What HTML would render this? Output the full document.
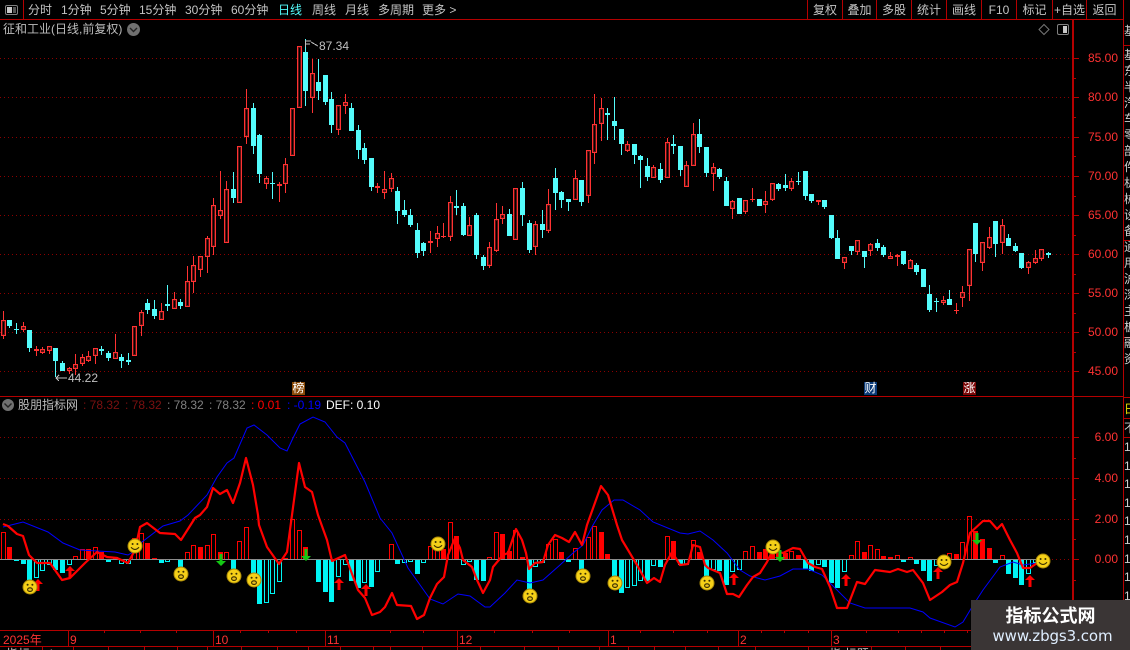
<!DOCTYPE html>
<html><head><meta charset="utf-8">
<style>
html,body{margin:0;padding:0;background:#000;}
#p{position:relative;width:1130px;height:650px;overflow:hidden;background:#000;font:12px/14px "Liberation Sans","WenQuanYi Zen Hei","Noto Sans CJK SC",sans-serif;color:#c4c4c4;}
#p div{position:absolute;white-space:nowrap;}
svg{position:absolute;left:0;top:0;}
.t{top:3px;}
.c{top:3px;text-align:center;}
.y{left:1087px;width:31px;text-align:right;color:#ff3232;}
.z{left:1087px;width:31px;text-align:right;color:#ff3232;}
.d{top:633px;color:#ff3232;}
.tag{width:13px;height:13px;line-height:13px;text-align:center;color:#fff;top:382px;font-size:12px;}
.i{top:398px;}
</style></head><body><div id="p">
<svg id="s" width="1130" height="650" viewBox="0 0 1130 650">
<defs>
<symbol id="h" viewBox="-8 -8 16 16" overflow="visible"><circle r="7" fill="#f5d018" stroke="#a88808"/><circle cx="-2.4" cy="-2" r="1" fill="#3a3000"/><circle cx="2.4" cy="-2" r="1" fill="#3a3000"/><path d="M-4 1.2Q0 5.6 4 1.2" fill="none" stroke="#3a3000" stroke-width="1.1"/></symbol>
<symbol id="u" viewBox="-8 -8 16 16" overflow="visible"><circle r="7" fill="#f5d018" stroke="#a88808"/><circle cx="-2.4" cy="-2.2" r="1" fill="#3a3000"/><circle cx="2.4" cy="-2.2" r="1" fill="#3a3000"/><ellipse cx="0" cy="2.6" rx="2.4" ry="1.8" fill="#e8c020" stroke="#3a3000" stroke-width="1.1"/></symbol>
</defs>
<g id="grid" fill="none" stroke="#8c0000" stroke-dasharray="1 3"><path d="M0 58.5H1072M0 97.5H1072M0 137.5H1072M0 176.5H1072M0 215.5H1072M0 254.5H1072M0 293.5H1072M0 332.5H1072M0 371.5H1072M0 437.5H1072M0 478.5H1072M0 519.5H1072M0 559.5H1072"/></g>
<g id="cand" shape-rendering="crispEdges"></g>
<rect x="0" y="559" width="1048" height="1" fill="#8c8c8c" shape-rendering="crispEdges"/>
<g id="bars" shape-rendering="crispEdges"></g>
<polyline fill="none" stroke="#0000ff" stroke-width="1" points="3,527 23,522 48,532 63,543 80,550 115,552 128,555 133,552 142,542 163,526 180,521 188,515 207,495 217,477 227,463 234,458 247,428 254,425 267,435 280,448 287,451 293,438 300,424 313,417 325,422 337,437 345,443 365,482 380,518 392,533 408,568 430,599 443,604 458,594 470,596 485,607 490,607 505,593 517,580 530,583 543,580 560,565 573,553 583,545 593,525 602,510 614,500 623,500 640,510 653,522 680,533 688,534 700,531 713,540 727,553 740,570 750,576 765,580 780,576 793,569 808,569 822,575 830,583 850,603 865,608 910,608 923,612 930,618 955,627 963,622 972,607 983,590 1000,567 1013,562 1023,565 1037,563"/>
<polyline fill="none" stroke="#ff0000" stroke-width="2.2" stroke-linejoin="round" points="3,524 8,526 17,534 23,536 29,555 37,563 50,563 62,580 70,578 85,563 97,552 107,557 117,558 128,563 135,550 140,527 147,523 160,533 175,534 181,540 195,518 200,515 207,507 213,488 220,494 227,490 233,503 240,483 246,458 253,485 258,515 259,525 267,547 279,564 287,552 292,515 299,463 305,487 312,492 318,515 327,540 332,561 345,555 358,590 365,598 372,615 380,612 385,607 392,593 397,605 411,606 417,619 424,615 430,598 437,584 444,577 448,555 455,538 460,548 463,560 472,567 477,580 483,593 490,580 493,567 503,555 508,553 516,529 522,540 526,553 529,569 535,563 543,562 548,545 555,535 562,538 569,542 575,532 582,545 587,525 601,486 608,495 617,525 622,540 628,550 637,565 647,583 654,578 660,582 665,565 672,552 680,565 688,564 693,545 700,547 705,565 708,568 720,573 727,594 733,594 739,597 747,585 753,577 760,573 767,562 773,550 783,553 793,548 800,549 808,563 815,567 822,569 830,587 837,608 847,608 857,582 865,584 875,570 890,572 898,569 907,572 913,570 923,583 930,600 942,592 950,585 957,582 963,563 970,533 983,521 990,521 997,529 1002,524 1010,540 1017,553 1023,568 1030,568 1037,563"/>
<g id="arrows"></g>
<use href="#u" x="22" y="579" width="16" height="16"/>
<use href="#h" x="127" y="538" width="16" height="16"/>
<use href="#u" x="173" y="566" width="16" height="16"/>
<use href="#u" x="226" y="568" width="16" height="16"/>
<use href="#u" x="246" y="572" width="16" height="16"/>
<use href="#h" x="430" y="536" width="16" height="16"/>
<use href="#u" x="522" y="588" width="16" height="16"/>
<use href="#u" x="575" y="568" width="16" height="16"/>
<use href="#u" x="607" y="575" width="16" height="16"/>
<use href="#u" x="699" y="575" width="16" height="16"/>
<use href="#h" x="765" y="539" width="16" height="16"/>
<use href="#h" x="936" y="554" width="16" height="16"/>
<use href="#h" x="1035" y="553" width="16" height="16"/>
<!-- high / low markers -->
<path d="M305.5 47V41H311M305.5 44H310M311 42L318 46" fill="none" stroke="#c0c0c0" shape-rendering="crispEdges"/>
<path d="M67 378H56M59 375L56 378L59 381" fill="none" stroke="#c0c0c0" shape-rendering="crispEdges"/>
<!-- frame -->
<g fill="#b40000" shape-rendering="crispEdges">
<rect x="0" y="19" width="1123" height="1"/>
<rect x="23" y="0" width="1" height="19"/>
<rect x="807" y="0" width="1" height="19"/><rect x="842" y="0" width="1" height="19"/><rect x="876" y="0" width="1" height="19"/><rect x="911" y="0" width="1" height="19"/><rect x="946" y="0" width="1" height="19"/><rect x="981" y="0" width="1" height="19"/><rect x="1016" y="0" width="1" height="19"/><rect x="1052" y="0" width="1" height="19"/><rect x="1086" y="0" width="1" height="19"/>
<rect x="1123" y="0" width="1" height="650"/>
<rect x="1072" y="19" width="2" height="627"/>
<rect x="0" y="396" width="1123" height="1"/>
<rect x="0" y="630" width="1072" height="1"/>
<rect x="0" y="646" width="1123" height="1"/>
<rect x="1123" y="45" width="7" height="1"/><rect x="1123" y="240" width="7" height="1"/><rect x="1123" y="337" width="7" height="1"/><rect x="1123" y="397" width="7" height="1"/><rect x="1123" y="418" width="7" height="1"/><rect x="1123" y="437" width="7" height="1"/>
<path d="M1074 58h5v1h-5zM1074 97h5v1h-5zM1074 137h5v1h-5zM1074 176h5v1h-5zM1074 215h5v1h-5zM1074 254h5v1h-5zM1074 293h5v1h-5zM1074 332h5v1h-5zM1074 371h5v1h-5zM1074 437h5v1h-5zM1074 478h5v1h-5zM1074 519h5v1h-5zM1074 559h5v1h-5zM1074 78h2v1h-2zM1074 117h2v1h-2zM1074 156h2v1h-2zM1074 196h2v1h-2zM1074 235h2v1h-2zM1074 274h2v1h-2zM1074 313h2v1h-2zM1074 352h2v1h-2zM1074 458h2v1h-2zM1074 499h2v1h-2zM1074 539h2v1h-2zM1074 580h2v1h-2zM1074 600h2v1h-2z"/>
<rect x="68" y="630" width="1" height="16"/><rect x="213" y="630" width="1" height="16"/><rect x="325" y="630" width="1" height="16"/><rect x="457" y="630" width="1" height="16"/><rect x="608" y="630" width="1" height="16"/><rect x="738" y="630" width="1" height="16"/><rect x="831" y="630" width="1" height="16"/>
<path d="M104 630v3h1v-3zM140 630v3h1v-3zM176 630v3h1v-3zM240 630v3h1v-3zM268 630v3h1v-3zM296 630v3h1v-3zM390 630v3h1v-3zM423 630v3h1v-3zM494 630v3h1v-3zM532 630v3h1v-3zM569 630v3h1v-3zM640 630v3h1v-3zM673 630v3h1v-3zM707 630v3h1v-3zM761 630v3h1v-3zM784 630v3h1v-3zM808 630v3h1v-3zM866 630v3h1v-3zM898 630v3h1v-3zM921 630v3h1v-3zM944 630v3h1v-3zM967 630v3h1v-3z"/>
<path d="M42 647v3h1v-3zM73 647v3h1v-3zM108 647v3h1v-3zM144 647v3h1v-3zM177 647v3h1v-3zM207 647v3h1v-3zM241 647v3h1v-3zM277 647v3h1v-3zM308 647v3h1v-3zM340 647v3h1v-3zM373 647v3h1v-3zM390 647v3h1v-3zM422 647v3h1v-3zM457 647v3h1v-3zM480 647v3h1v-3zM524 647v3h1v-3zM558 647v3h1v-3zM599 647v3h1v-3zM628 647v3h1v-3zM654 647v3h1v-3zM685 647v3h1v-3zM718 647v3h1v-3zM755 647v3h1v-3zM808 647v3h1v-3zM871 647v3h1v-3zM905 647v3h1v-3zM940 647v3h1v-3z"/>
</g>
<!-- toolbar icon left -->
<rect x="5.5" y="5.5" width="12" height="9" rx="1.5" fill="none" stroke="#808080"/><rect x="7" y="7" width="5" height="6" fill="#c8c8c8"/><rect x="13" y="7" width="3" height="6" fill="#555"/>
<!-- top right icons -->
<path d="M1044 24.5L1049 29.5L1044 34.5L1039 29.5Z" fill="none" stroke="#777"/>
<rect x="1057.5" y="24.5" width="11" height="10" rx="1.5" fill="none" stroke="#808080"/><rect x="1063" y="26" width="4" height="7" fill="#c8c8c8"/>
<!-- circle chevrons -->
<circle cx="133.5" cy="29.5" r="6.5" fill="#707070"/><path d="M130 28L133.5 31.5L137 28" fill="none" stroke="#222" stroke-width="1.4"/>
<circle cx="8" cy="405" r="6" fill="#707070"/><path d="M4.5 403.5L8 407L11.5 403.5" fill="none" stroke="#222" stroke-width="1.4"/>
</svg>

<div class="t" style="left:28px">分时</div><div class="t" style="left:61px">1分钟</div><div class="t" style="left:100px">5分钟</div><div class="t" style="left:139px">15分钟</div><div class="t" style="left:185px">30分钟</div><div class="t" style="left:231px">60分钟</div><div class="t" style="left:278px;color:#54fcfc">日线</div><div class="t" style="left:312px">周线</div><div class="t" style="left:345px">月线</div><div class="t" style="left:378px">多周期</div><div class="t" style="left:422px">更多 &gt;</div>

<div class="c" style="left:807px;width:36px">复权</div><div class="c" style="left:842px;width:35px">叠加</div><div class="c" style="left:876px;width:36px">多股</div><div class="c" style="left:911px;width:36px">统计</div><div class="c" style="left:946px;width:36px">画线</div><div class="c" style="left:981px;width:36px">F10</div><div class="c" style="left:1016px;width:37px">标记</div><div class="c" style="left:1052px;width:35px">+自选</div><div class="c" style="left:1086px;width:37px">返回</div>

<div style="left:3px;top:22px;color:#bcbcbc">征和工业(日线,前复权)</div>
<div style="left:319px;top:39px;color:#c0c0c0">87.34</div>
<div style="left:68px;top:371px;color:#c0c0c0">44.22</div>

<div class="y" style="top:51px">85.00</div><div class="y" style="top:90px">80.00</div><div class="y" style="top:130px">75.00</div><div class="y" style="top:169px">70.00</div><div class="y" style="top:208px">65.00</div><div class="y" style="top:247px">60.00</div><div class="y" style="top:286px">55.00</div><div class="y" style="top:325px">50.00</div><div class="y" style="top:364px">45.00</div>
<div class="z" style="top:430px">6.00</div><div class="z" style="top:471px">4.00</div><div class="z" style="top:512px">2.00</div><div class="z" style="top:552px">0.00</div>

<div class="tag" style="left:292px;background:#8a4a08">榜</div><div class="tag" style="left:864px;background:#0a3a78">财</div><div class="tag" style="left:963px;background:#7c0808">涨</div>

<div class="i" style="left:18px;color:#bcbcbc">股朋指标网</div>
<div class="i" style="left:83px;color:#7c1010">: 78.32</div><div class="i" style="left:125px;color:#7c1010">: 78.32</div>
<div class="i" style="left:167px;color:#808080">: 78.32</div><div class="i" style="left:209px;color:#808080">: 78.32</div>
<div class="i" style="left:251px;color:#ff0000">: 0.01</div><div class="i" style="left:287px;color:#0000ff">: -0.19</div>
<div class="i" style="left:326px;color:#fff">DEF: 0.10</div>

<div class="d" style="left:3px">2025年</div><div class="d" style="left:70px">9</div><div class="d" style="left:215px">10</div><div class="d" style="left:327px">11</div><div class="d" style="left:459px">12</div><div class="d" style="left:610px">1</div><div class="d" style="left:740px">2</div><div class="d" style="left:833px">3</div>

<div style="left:6px;top:647px;height:3px;overflow:hidden;color:#ccc">指标&nbsp;&nbsp;&nbsp;&nbsp;&nbsp;&nbsp;i</div>
<div style="left:826px;top:647px;height:3px;overflow:hidden;color:#ccc">&nbsp;指&nbsp;标题</div>

<div id="rc" style="left:1124px;top:0;width:6px;height:650px;overflow:hidden;color:#d0d0d0"></div>

<div style="left:971px;top:600px;width:159px;height:50px;background:#3a3535"></div>
<div style="left:971px;top:603px;width:159px;text-align:center;font:bold 18px/24px 'Noto Sans CJK SC','WenQuanYi Zen Hei',sans-serif;color:#fff">指标公式网</div>
<div style="left:973px;top:627px;width:159px;text-align:center;font:15px/18px 'DejaVu Sans','Liberation Sans',sans-serif;letter-spacing:-.1px;color:#dfeeff">www.zbgs3.com</div>
</div>
<script>
var C=[[320,336,311,339,0],[320,326,320,328,1],[329,330,323,334,1],[326,330,322,332,0],[330,348,330,352,1],[349,351,346,356,0],[349,353,347,354,0],[346,351,346,354,0],[348,361,348,377,1],[363,371,361,371,1],[368,371,367,374,0],[364,369,354,375,0],[357,364,354,366,0],[356,361,351,362,0],[348,356,348,364,0],[349,351,346,355,1],[353,358,351,361,1],[352,359,334,359,0],[357,361,354,368,1],[360,362,353,365,1],[326,356,326,356,0],[312,326,310,336,0],[303,310,299,314,1],[309,316,300,319,1],[311,320,303,320,0],[304,306,285,311,1],[299,309,292,309,0],[302,306,299,309,1],[281,307,266,307,0],[265,282,256,293,0],[256,270,256,277,0],[238,257,236,273,0],[205,247,198,255,0],[210,216,171,219,0],[189,243,181,243,0],[189,198,172,203,1],[146,203,146,203,0],[108,137,89,144,0],[108,146,103,154,1],[135,174,134,183,1],[178,184,176,189,0],[183,184,172,199,1],[184,186,182,202,0],[164,184,158,193,0],[108,156,108,156,0],[46,108,46,108,0],[52,91,39,106,1],[73,98,59,113,0],[82,91,59,100,1],[75,102,75,105,1],[99,125,92,133,1],[105,130,105,135,0],[102,106,94,114,0],[108,131,103,131,1],[130,150,125,159,1],[148,160,143,164,1],[158,187,158,191,1],[186,188,183,193,0],[189,193,171,199,0],[178,189,173,192,0],[191,211,187,224,1],[210,215,200,217,1],[215,225,209,227,1],[230,253,223,258,1],[243,251,242,256,1],[241,243,231,253,0],[233,239,226,247,0],[236,237,223,238,0],[202,237,196,241,0],[206,208,190,215,1],[206,235,203,236,1],[225,236,217,236,0],[215,255,213,259,1],[257,266,255,270,1],[247,266,242,268,0],[219,251,203,252,0],[214,219,206,224,0],[214,236,209,236,1],[188,240,188,240,0],[188,215,182,226,1],[223,250,220,253,1],[224,247,221,255,0],[224,230,210,238,1],[204,231,189,233,0],[178,193,168,210,1],[192,200,191,208,1],[199,202,199,211,1],[178,200,170,200,0],[180,202,180,206,1],[150,196,150,203,0],[124,153,94,164,0],[108,124,98,141,0],[113,115,108,140,1],[121,126,97,140,1],[129,144,129,155,1],[144,151,141,152,0],[144,155,144,164,1],[156,160,155,188,1],[166,177,158,181,1],[167,178,165,178,0],[169,180,163,183,1],[142,178,138,178,0],[144,146,135,154,1],[146,170,146,176,1],[165,187,161,187,0],[134,166,123,166,0],[134,147,119,153,1],[147,173,147,177,1],[167,174,163,191,0],[169,177,168,179,1],[181,206,177,206,1],[201,209,200,219,0],[198,214,198,214,1],[200,212,200,214,0],[199,200,188,202,0],[199,206,199,206,1],[201,205,191,213,0],[183,200,183,201,0],[184,189,183,191,1],[185,188,174,191,1],[181,189,178,191,0],[181,182,172,185,1],[171,196,171,200,1],[194,201,194,203,1],[200,202,200,205,0],[200,207,200,209,1],[215,238,215,239,1],[238,259,230,259,1],[257,263,257,269,0],[246,251,246,255,1],[240,252,240,255,0],[251,257,251,268,1],[244,251,243,256,0],[243,248,239,251,1],[247,255,245,257,1],[256,259,252,259,0],[255,257,254,266,0],[251,264,251,265,1],[260,269,259,269,0],[265,272,263,275,1],[269,287,269,287,1],[294,310,285,312,1],[301,302,298,312,1],[300,303,296,305,0],[299,305,290,305,1],[310,311,303,314,0],[292,298,286,307,0],[249,286,249,301,0],[223,254,223,262,1],[242,263,242,271,0],[237,248,227,249,0],[221,244,221,257,1],[225,243,219,254,0],[238,246,234,246,1],[246,251,243,252,1],[253,268,253,269,1],[262,268,261,274,0],[258,263,250,264,0],[249,259,249,261,0],[253,255,252,258,1]];
var B=[-66,111,153,162,210,-204,-183,-165,180,189,-165,-138,-118,117,-111,125,156,141,-163,-162,-84,-69,99,144,159,-156,148,180,-126,-105,111,-105,-72,126,-126,180,-93,-51,195,282,-279,-252,-216,144,-27,-60,111,148,216,246,276,-201,-165,213,234,-219,231,-186,148,-102,162,-159,-155,192,-159,-108,-80,117,-37,78,-164,-155,210,213,-141,-67,72,123,-60,141,237,-170,-160,-102,-87,126,155,-114,180,-82,-48,66,132,198,249,-234,-228,-213,213,-168,171,-78,93,165,-165,-90,126,198,-180,183,225,-186,-180,-124,-109,126,118,100,130,128,-123,135,176,182,-166,171,218,233,-187,-136,-94,126,-106,-118,138,141,-136,155,-142,162,183,212,-168,148,-130,132,-97,-18,64,88,114,158,-136,192,204,225,-192,-158,148];
function X(i){return Math.floor(3.3+6.572*i);}
function R(x,y,w,h,c){return '<rect x="'+x+'" y="'+y+'" width="'+w+'" height="'+h+'" fill="'+c+'"/>';}
var h='',RED='#ff3232',CY='#54fcfc';
C.forEach(function(c,i){var x=X(i),col=c[4]?CY:RED,t=c[0],b=c[1];
 if(c[2]<t)h+=R(x,c[2],1,t-c[2],col);
 if(c[3]>b)h+=R(x,b,1,c[3]-b,col);
 if(c[4]||b-t<=2)h+=R(x-2,t,5,Math.max(1,b-t),col);
 else{
  h+=R(x-1,t+1,3,b-t-2,'#5a1212');
  if(b-t>4)h+=R(x,t+2,1,b-t-4,'#000');
  h+=R(x-2,t,5,1,col)+R(x-2,b-1,5,1,col)+R(x-2,t,1,b-t,col)+R(x+2,t,1,b-t,col);
 }
});
document.getElementById('cand').innerHTML=h;
h='';
B.forEach(function(v,i){var z=Math.abs(v);if(z==148)return;var y=Math.round(510+z/3),x=X(i),up=y<559,col=up?'#ff0000':'#00f4f4';
 var t=up?y:560,H=up?559-y:y-560;if(H<1)H=1;
 if(v>0){h+=R(x-2,t,5,H,col);}
 else{h+=R(x-2,t,1,H,col)+R(x+2,t,1,H,col)+R(x-2,up?t:t+H-1,5,1,col);}
});
document.getElementById('bars').innerHTML=h;
h='';
[[38,585],[70,572],[339,584],[366,590],[734,579],[846,580],[938,573],[1030,581]].forEach(function(a){var x=a[0],y=a[1];
 h+='<polygon fill="#ff0000" points="'+x+','+(y-6)+' '+(x+5)+','+(y-1)+' '+(x+1.5)+','+(y-1)+' '+(x+1.5)+','+(y+6)+' '+(x-1.5)+','+(y+6)+' '+(x-1.5)+','+(y-1)+' '+(x-5)+','+(y-1)+'"/>';});
[[221,560],[306,555],[780,556],[977,539]].forEach(function(a){var x=a[0],y=a[1];
 h+='<polygon fill="#14c814" points="'+x+','+(y+6)+' '+(x+5)+','+(y+1)+' '+(x+1.5)+','+(y+1)+' '+(x+1.5)+','+(y-6)+' '+(x-1.5)+','+(y-6)+' '+(x-1.5)+','+(y+1)+' '+(x-5)+','+(y+1)+'"/>';});
document.getElementById('arrows').innerHTML=h;
h='';
function row(y,t,c){h+='<div style="left:0;top:'+y+'px;'+(c?'color:'+c:'')+'">'+t+'</div>';}
row(24,'基');
"基东半汽车零部件机械设备通用沪深主板融资".split('').forEach(function(ch,i){var y=48+i*16;if(y<380&&Math.abs(y-233)>3&&Math.abs(y-330)>3)row(y,ch);});
row(402,'日','#e8e000');row(421,'不');
for(var y=440;y<600;y+=18.6)row(Math.round(y),'1');
document.getElementById('rc').innerHTML=h;
</script>
</body></html>
